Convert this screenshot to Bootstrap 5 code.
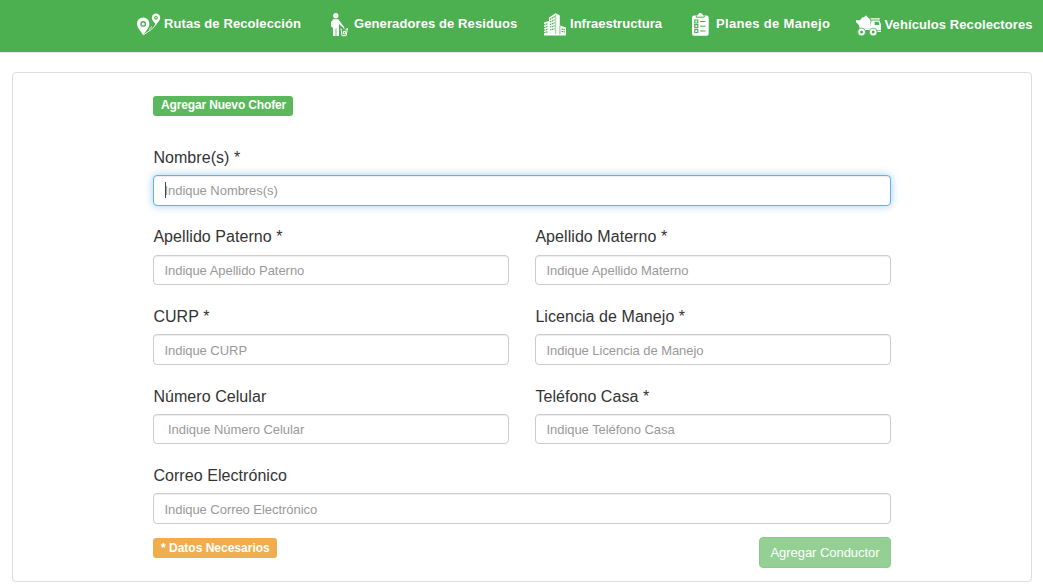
<!DOCTYPE html>
<html lang="es">
<head>
<meta charset="utf-8">
<meta name="viewport" content="width=device-width, initial-scale=1">
<title>Agregar Nuevo Chofer</title>
<link href="https://cdn.jsdelivr.net/npm/bootstrap@5.3.0/dist/css/bootstrap.min.css" rel="stylesheet">
<style>
body{font-family:"Liberation Sans",Arial,sans-serif;font-size:13px;color:#333;background:#fff;overflow:hidden}
.top-menu{height:52px;background:#4caf50;border-bottom:1px solid #e7e7e7;box-sizing:content-box}
.menu-grid{display:grid;grid-template-columns:194px 213px 148px 164px 1fr;margin-left:137px;height:47px;list-style:none;padding:0}
.menu-grid .nav-link{color:#fff;font-weight:700;font-size:13px;line-height:20px;white-space:nowrap;padding:0;letter-spacing:.1px}
.menu-grid .wide-text{letter-spacing:.32px}
.menu-grid .tight-text{letter-spacing:.02px}
.menu-grid svg{display:block;flex:none;fill:#fff;margin-top:2px}
.menu-grid .truck-item{padding-top:2px}
.menu-grid .truck-item svg{margin-top:4px}
.panel{margin:19px 11px 0 12px;height:510px;border:1px solid #ddd;border-radius:4px;box-shadow:0 1px 1px rgba(0,0,0,.05)}
.form-area{width:738px;margin-left:140px;padding-top:23px}
.tag{display:block;width:max-content;height:20px;border-radius:3px;font-size:12px;line-height:18px;font-weight:700;color:#fff;padding:0 8px;white-space:nowrap}
.tag-green{background:#5cb85c;width:140px;letter-spacing:-.15px}
.tag-orange{background:#f0ad4e;width:124px;margin-top:1px;line-height:20px}
.fields{display:grid;grid-template-columns:356px 356px;column-gap:26px;row-gap:19.6px;margin-top:30px}
.span-all{grid-column:1/-1}
.form-label{display:block;height:29.4px;line-height:23.4px;font-size:16px;margin:0;padding-left:.4px;letter-spacing:.06px;color:#333}
.low-label{padding-top:.7px}
.form-control{height:30.5px;padding:0 10.5px;border:1px solid #ccc;border-radius:4px;font-size:13px;letter-spacing:-.05px;box-shadow:inset 0 1px 1px rgba(0,0,0,.075);color:#555;line-height:20px}
.form-control::placeholder{color:#999;opacity:1}
.low-text{padding-top:1px}
.form-control.active-field{border-color:#66afe9;box-shadow:inset 0 1px 1px rgba(0,0,0,.075),0 0 8px rgba(102,175,233,.6)}
.caret{position:absolute;left:12px;top:7px;width:1px;height:16px;background:#444}
.foot-row{margin-top:13px}
.btn-add{width:132px;height:31px;background:#5cb85c;border:1px solid #4cae4c;color:#fff;opacity:.65;font-size:13px;letter-spacing:-.05px;padding:1px 0 0;border-radius:4px;line-height:20px}
</style>
<script src="https://cdn.jsdelivr.net/npm/bootstrap@5.3.0/dist/js/bootstrap.bundle.min.js"></script>
</head>
<body>
<nav class="top-menu">
<ul class="menu-grid mb-0">
<li><a class="nav-link d-flex align-items-center h-100" href="#"><svg width="27" height="24" viewBox="0 0 27 24"><path fill-rule="evenodd" d="M6.200 4.500a6.200 6 0 0 1 6.200 6.200c0 4.300-4.200 7.600-6.200 11.800C4.200 18.300 0 15 0 10.700a6.200 6 0 0 1 6.200-6.200zm0 3.500a2.900 2.900 0 1 0 0 5.800a2.900 2.900 0 0 0 0-5.800zM19 .5a4.200 4.200 0 0 1 4.200 4.200c0 2.800-2.700 4.500-4.200 7.300c-1.500-2.800-4.200-4.500-4.200-7.300a4.200 4.200 0 0 1 4.200-4.200zm0 2.400a1.900 1.900 0 1 0 0 3.800a1.900 1.900 0 0 0 0-3.800z"/><circle cx="6.200" cy="10.900" r="1.500"/><circle cx="19" cy="4.800" r=".8"/><path d="M7 21.500C11 18.500 16.500 16 19 11M12.500 16.500C13 14.500 14 14.500 15 13.500" fill="none" stroke="#fff" stroke-width=".9"/></svg><span>Rutas de Recolección</span></a></li>
<li><a class="nav-link d-flex align-items-center h-100" href="#"><svg width="23" height="24" viewBox="0 0 23 24"><circle cx="4.800" cy="2.800" r="2.700"/><path d="M2.300 6.300h5l5.200 7-1 .9L8 11v12H5.400V15.500h-.8V23H2v-8L0 13.500V9z"/><path d="M10 15.500l1 7.200h4.200l1.200-7.500-2.200 2.300M12.300 20.800v-2.300l2.200 0v2.300h-2.200M12 13l1.200 3" fill="none" stroke="#fff" stroke-width="1"/></svg><span>Generadores de Residuos</span></a></li>
<li><a class="nav-link tight-text d-flex align-items-center h-100" href="#"><svg width="26" height="24" viewBox="0 0 26 24"><path d="M5 4.500L11.500.3l4.300 2V22.500H0V9.500l5-1.500z"/><path d="M16 12.500l6 2v8h-6z"/><path d="M11.700 1.500V21M16 13v8" stroke="#4caf50" stroke-width=".6"/><path d="M0 12l4-1.500M0 14.600l4-1.300M0 17.200l4-1M0 19.600l4-.8M6 6.300L10.700 3.600M6 9L10.700 6.800M6 11.600L10.700 9.800M6 14.200L10.700 12.800M6 16.800L10.700 15.800M17.500 16l3.500.7M17.500 18.500l3.500.4" stroke="#4caf50" stroke-width="1.200" stroke-dasharray="1.500 .5"/></svg><span>Infraestructura</span></a></li>
<li><a class="nav-link wide-text d-flex align-items-center h-100" href="#"><svg width="24" height="24" viewBox="0 0 24 24"><path d="M2 2.500h3C6 2.500 6 0 8.300 0S10.500 2.500 11.700 2.500H14.700q2 0 2 2v16.300q0 2-2 2H2q-2 0-2-2V4.500q0-2 2-2z"/><path d="M4.300 2.700v1.500h8V2.700M8 8.500h5.500M8 13.200h5.500M8 18h5.500" fill="none" stroke="#4caf50"/><path d="M2.800 7h3v3h-3zM2.800 11.700h3v3h-3zM2.800 16.500h3v3h-3z" fill="none" stroke="#4caf50" stroke-width="1.200"/></svg><span>Planes de Manejo</span></a></li>
<li class="truck-item"><a class="nav-link d-flex align-items-center h-100" href="#"><svg width="28.500" height="24" viewBox="0 0 28.500 24"><path d="M4.500 4.500l2-2.300 1.500.2L9.800.3l4.200 4.200v.7H4.500zM0 5.200h14.500v8.500H4L2.500 9.500 0 7.200zM14.500 3.200h9.300v1.300h-9.300zM15.500 5.500h8l1.500 4v5H14z"/><path d="M18.700 6.700h3.800l.8 3.300h-4.600z" fill="#4caf50"/><path d="M3 13.500h22v1.500H3z"/><g fill="#fff" stroke="#4caf50" stroke-width=".8"><circle cx="5.600" cy="17" r="3.900"/><circle cx="17.200" cy="17" r="3.900"/></g><circle cx="5.600" cy="17" r="1.500" fill="#4caf50"/><circle cx="17.200" cy="17" r="1.500" fill="#4caf50"/><path d="M21.500 15.600H25v1.400h-3.500z"/></svg><span>Vehículos Recolectores</span></a></li>
</ul>
</nav>
<main class="panel">
<form class="form-area">
<span class="tag tag-green">Agregar Nuevo Chofer</span>
<div class="fields">
<div class="span-all"><label class="form-label" for="nombre">Nombre(s) *</label><div class="position-relative"><input id="nombre" class="form-control active-field" placeholder="Indique Nombres(s)"><i class="caret"></i></div></div>
<div><label class="form-label" for="paterno">Apellido Paterno *</label><input id="paterno" class="form-control" placeholder="Indique Apellido Paterno"></div>
<div><label class="form-label" for="materno">Apellido Materno *</label><input id="materno" class="form-control" placeholder="Indique Apellido Materno"></div>
<div><label class="form-label" for="curp">CURP *</label><input id="curp" class="form-control low-text" placeholder="Indique CURP"></div>
<div><label class="form-label" for="licencia">Licencia de Manejo *</label><input id="licencia" class="form-control low-text" placeholder="Indique Licencia de Manejo"></div>
<div><label class="form-label low-label" for="celular">Número Celular</label><input id="celular" class="form-control" placeholder="&nbsp;Indique Número Celular"></div>
<div><label class="form-label low-label" for="casa">Teléfono Casa *</label><input id="casa" class="form-control" placeholder="Indique Teléfono Casa"></div>
<div class="span-all"><label class="form-label" for="correo">Correo Electrónico</label><input id="correo" class="form-control low-text" placeholder="Indique Correo Electrónico"></div>
</div>
<div class="d-flex justify-content-between align-items-start foot-row">
<span class="tag tag-orange">* Datos Necesarios</span>
<button class="btn btn-add" type="button">Agregar Conductor</button>
</div>
</form>
</main>
</body>
</html>
